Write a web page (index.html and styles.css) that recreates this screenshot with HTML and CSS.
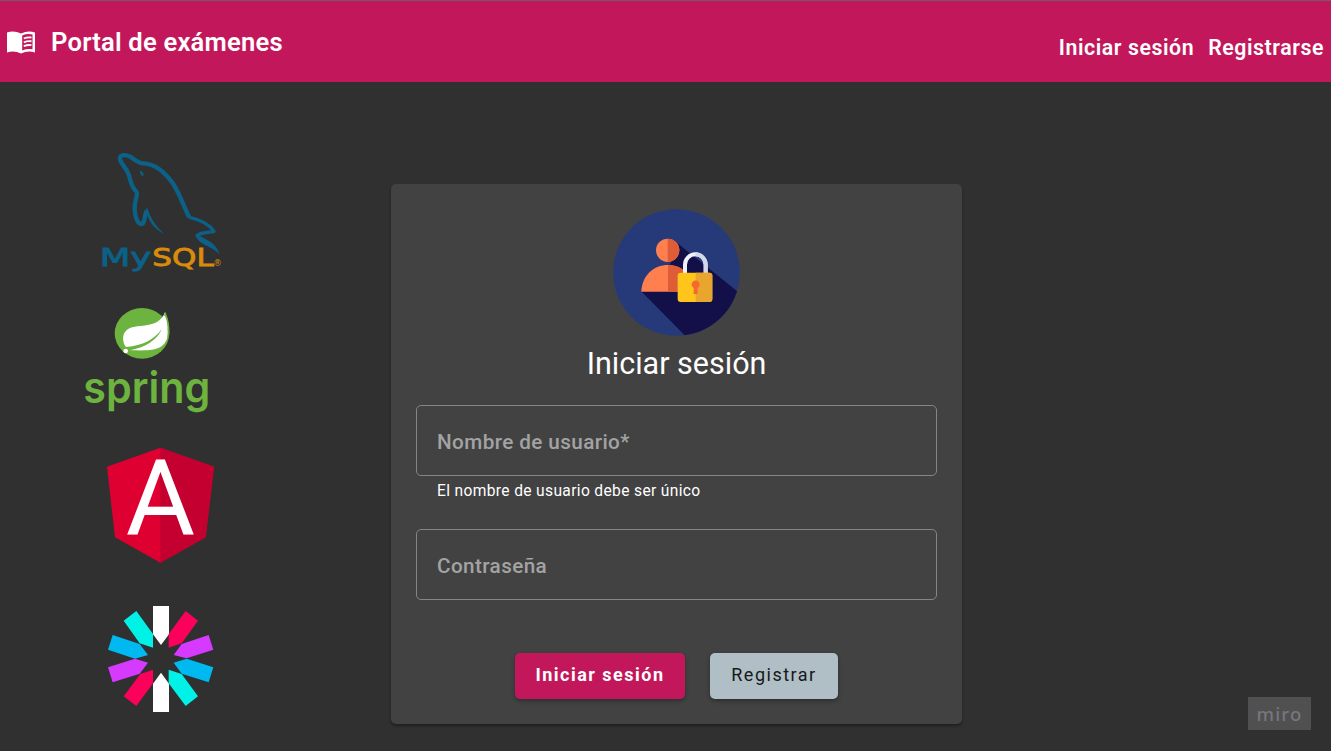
FILE: index.html
```html
<!DOCTYPE html>
<html lang="es">
<head>
<meta charset="utf-8">
<title>Portal de exámenes</title>
<link rel="stylesheet" href="styles.css">
</head>
<body>
<header class="toolbar">
  <div class="brand">
    <svg class="brand-icon" viewBox="0 0 30 24">
      <path d="M1 2.5Q8 0 15 3.5Q22 0 29 2.5V22.500Q22 20 15 23.500Q8 20 1 22.500Z" fill="#fff"/>
      <path d="M16.200 5.500Q21 3.400 26.500 4.500V19.300Q21 18.400 16.200 20.500Z" fill="#c2185b"/>
      <path d="M17.800 8.500Q21.500 6.900 25.500 7.500M17.800 12.300Q21.500 10.700 25.500 11.300M17.800 16.100Q21.500 14.500 25.500 15.100" fill="none" stroke="#fff" stroke-width="1.900"/>
    </svg>
    <span class="brand-name">Portal de exámenes</span>
  </div>
  <nav class="nav"><a class="nav-link">Iniciar sesión</a><a class="nav-link">Registrarse</a></nav>
</header>
<main class="page">
  <aside class="logos">
    <svg class="logo mysql" viewBox="0 0 480 420">
      <g fill="none" stroke="#0b6187" stroke-width="13" stroke-linejoin="round">
        <path d="M328 232C318 216 300 162 278 129C252 93 224 72 191 70C175 71 165 59 150 50C135 42 120 44 120 56C120 68 137 80 145 101C153 122 151 138 170 156C174 168 162 184 164 207C166 234 171 251 184 252C195 252 193 226 200 212"/>
        <path d="M328 232C356 238 386 250 402 274C383 278 360 277 351 287C358 297 371 303 385 309" stroke-width="10"/>
      </g>
      <path d="M201 201C211 236 229 260 252 281C225 268 209 248 201 222L196 216ZM352 283C367 296 408 304 419 343C400 322 365 315 352 297ZM179 92C188 93 193 102 190 109C184 108 181 102 179 92Z" fill="#0b6187"/>
      <text class="mysql-word my" x="59" y="378" textLength="155" lengthAdjust="spacingAndGlyphs">My</text>
      <text class="mysql-word sql" x="217" y="378" textLength="184" lengthAdjust="spacingAndGlyphs">SQL</text>
      <text class="mysql-reg" x="400" y="379" fill="#d98b0b">®</text>
    </svg>
    <svg class="logo spring" viewBox="0 0 450 375">
      <ellipse cx="201" cy="115" rx="82" ry="76" fill="#6db33f"/>
      <path d="M270 52C284 85 287 121 269 145C251 169 211 167 165 166C208 157 246 137 261 101C237 134 204 151 153 156C143 145 140 119 153 107C181 81 247 109 270 52Z" fill="#fff"/>
      <path d="M266 63L271 50Q286 85 283 117L276 132Q282 91 270 62Z" fill="#6db33f"/>
      <circle cx="152" cy="168" r="7" fill="#fff"/>
      <text class="spring-word" x="25" y="323" textLength="381" lengthAdjust="spacingAndGlyphs" fill="#6db33f">spring</text>
    </svg>
    <svg class="logo angular" viewBox="0 0 390 420">
      <path d="M196 38L357 95L332 307L196 383L60 307L36 95Z" fill="#dd0031"/>
      <path d="M196 38L357 95L332 307L196 383Z" fill="#c3002f"/>
      <text class="angular-word" x="92" y="300" textLength="208" lengthAdjust="spacingAndGlyphs">A</text>
    </svg>
    <svg class="logo jwt" viewBox="0 0 390 390">
      <path d="M174 33H222V118L198 150L174 118ZM174 351H222V266L198 233L174 266Z" fill="#fff"/>
      <path d="M272 48L309 77L260 145L221 158V117ZM124 333L86 304L136 237L174 224V265Z" fill="#fb015b"/>
      <path d="M341 120L355 164L275 190L236 180L260 147ZM53 262L39 217L120 191L159 203L134 236Z" fill="#d63aff"/>
      <path d="M355 217L341 262L260 236L236 203L275 191ZM39 164L53 120L134 147L159 180L120 191Z" fill="#00b9f1"/>
      <path d="M309 304L272 333L221 265V224L260 237ZM86 77L124 48L174 117V158L134 145Z" fill="#00f2e6"/>
    </svg>
  </aside>
  <section class="card">
    <svg class="avatar" viewBox="39 27 381 381">
      <clipPath id="disc"><circle cx="229.500" cy="217.500" r="190"/></clipPath>
      <g clip-path="url(#disc)">
        <rect x="39" y="27" width="381" height="381" fill="#263a7a"/>
        <path d="M227 125L440 297V440H288L125 275L210 195Z" fill="#120f49"/>
      </g>
      <circle cx="203" cy="151" r="35" fill="#ff7f4f"/>
      <path d="M203 116a35 35 0 0 1 0 70Z" fill="#df5d36"/>
      <path d="M124 275C126 225 162 195 204 195C245 195 280 225 282 275Z" fill="#ff7f4f"/>
      <path d="M204 195C245 195 280 225 282 275H204Z" fill="#df5d36"/>
      <path d="M255 222V194a31 31 0 0 1 62 0V222" fill="none" stroke="#f0f2fa" stroke-width="12"/>
      <path d="M286 163a31 31 0 0 1 31 31V222" fill="none" stroke="#d5d8e8" stroke-width="12"/>
      <rect x="233" y="218" width="104" height="88" rx="9" fill="#ffc51b"/>
      <path d="M287 218H328q9 0 9 9V297q0 9-9 9H287Z" fill="#e8a62f"/>
      <path d="M281 282V264a12 12 0 1 1 12 0V282Z" fill="#f4692f"/>
    </svg>
    <h1 class="card-title">Iniciar sesión</h1>
    <div class="field"><span class="label">Nombre de usuario*</span></div>
    <p class="hint">El nombre de usuario debe ser único</p>
    <div class="field"><span class="label">Contraseña</span></div>
    <div class="actions">
      <button class="btn primary">Iniciar sesión</button>
      <button class="btn secondary">Registrar</button>
    </div>
  </section>
  <div class="watermark">miro</div>
</main>
</body>
</html>
```
FILE: styles.css
```css
* { box-sizing: border-box; }
body { margin: 0; width: 1331px; height: 751px; overflow: hidden; background: #303030; font-family: Roboto, sans-serif; color: #fff; }
.toolbar { height: 82px; border-top: 1px solid #7b566b; background: #c2185b; display: flex; justify-content: space-between; padding: 0 7px 0 6px; }
.brand { display: flex; align-items: center; gap: 15px; }
.brand-icon { width: 30px; height: 24px; margin-top: 1px; }
.brand-name { font-size: 25.600px; font-weight: 600; letter-spacing: 0.200px; }
.nav { display: flex; align-items: center; gap: 14px; padding-top: 12px; font-size: 21.300px; font-weight: 600; letter-spacing: 0.570px; }
.page { height: 669px; display: flex; align-items: flex-start; }
.logos { width: 160px; margin: 58px 0 0 80px; display: flex; flex-direction: column; align-items: center; }
.logo { display: block; flex: none; }
.mysql { width: 160px; height: 140px; }
.spring { width: 150px; height: 125px; margin: 15px 20px 15px 0; }
.angular { width: 130px; height: 140px; }
.jwt { width: 130px; height: 130px; margin-top: 20px; }
.mysql-word { font: 400 74px "DejaVu Sans", sans-serif; stroke-width: 2.500px; }
.my { fill: #0b6187; stroke: #0b6187; }
.sql { fill: #d98b0b; stroke: #d98b0b; }
.mysql-reg { font: 400 26px "DejaVu Sans", sans-serif; }
.spring-word { font: 600 129px Inter, sans-serif; }
.angular-word { font: 400 316px Roboto, sans-serif; fill: #fff; }
.card { width: 571px; height: 540px; margin: 102px 0 0 151px; padding: 25px; border-radius: 5px; background: #424242; box-shadow: 0 2px 3px rgba(0, 0, 0, .35); display: flex; flex-direction: column; align-items: center; }
.avatar { width: 127px; height: 127px; flex: none; }
.card-title { margin: 8px 0 21px; font-size: 30.500px; line-height: 40px; font-weight: 400; white-space: nowrap; }
.field { width: 521px; height: 71px; flex: none; border: 1px solid #858585; border-radius: 5px; padding: 2px 19px 0 20px; display: flex; align-items: center; }
.label { font-size: 20.700px; font-weight: 500; letter-spacing: 0.400px; color: #a3a3a3; }
.hint { align-self: flex-start; margin: 4px 0 27px 21px; font-size: 15.600px; line-height: 22px; letter-spacing: 0.340px; }
.actions { display: flex; gap: 25px; margin-top: 53px; }
.btn { height: 46px; border: 0; border-radius: 5px; padding: 0 0 3px; font-family: Roboto, sans-serif; font-size: 18px; letter-spacing: 1.500px; box-shadow: 0 2px 4px rgba(0, 0, 0, .32); }
.primary { width: 170px; background: #c2185b; color: #fff; font-weight: 700; }
.secondary { width: 128px; background: #b0bec5; color: #16191b; font-weight: 400; }
.watermark { width: 63px; height: 33px; margin: 615px 0 0 286px; background: #505050; color: #77767f; font: 500 18.500px/33px "Noto Sans", sans-serif; letter-spacing: 1.200px; text-align: center; }
```
